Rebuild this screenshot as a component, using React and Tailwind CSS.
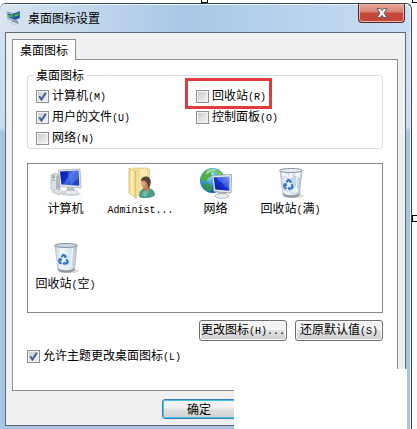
import { useState } from "react";

// Latin characters are set in half-width cells next to the Chinese text
function Mixed({ text, latin }) {
  return (
    <span className="whitespace-nowrap">
      {text}
      {latin && <span className="font-['Liberation_Mono','Noto_Sans_CJK_SC',monospace] text-[10px]">{latin}</span>}
    </span>
  );
}

function Check({ text, latin, checked = false, marked = false }) {
  const [on, setOn] = useState(checked);
  return (
    <label className="relative flex h-[18px] w-fit items-center gap-[3px]">
      <span className="relative h-[13px] w-[13px]">
        <input
          type="checkbox"
          checked={on}
          onChange={(e) => setOn(e.target.checked)}
          className="block h-[13px] w-[13px] appearance-none border border-[#8e8f8f] bg-linear-to-br from-[#c6cacf] to-[#f6f6f6] shadow-[inset_0_0_0_1px_#f4f4f4]"
        />
        {on && (
          <svg viewBox="0 0 13 13" className="pointer-events-none absolute inset-0 h-[13px] w-[13px]">
            <path d="M3.2 6.2 L5.5 9.5 L9.8 2.8" fill="none" stroke="#3f5b97" strokeWidth="2" />
          </svg>
        )}
      </span>
      <Mixed text={text} latin={latin} />
      {marked && <span className="pointer-events-none absolute -top-[9px] -right-[6px] -bottom-[4px] -left-[11px] border-3 border-[#e13b3f]" />}
    </label>
  );
}

function ComputerIcon() {
  return (
    <svg viewBox="0 0 32 32" className="h-8 w-8">
      <defs>
        <linearGradient id="pcScreen" x1="0" y1="0" x2="1" y2="0.5">
          <stop offset="0" stopColor="#0b1c9c" />
          <stop offset="0.45" stopColor="#1030c4" />
          <stop offset="0.55" stopColor="#3f68e2" />
          <stop offset="1" stopColor="#1c44cc" />
        </linearGradient>
      </defs>
      <ellipse cx="21" cy="27" rx="10" ry="2" fill="#d9dcdf" />
      <path d="M1 8 L5 6 L10 8 V23 L6 25 L1 22 Z" fill="#dce1e5" stroke="#9aa4ac" strokeWidth="0.6" />
      <path d="M6 9 L10 8 V23 L6 25 Z" fill="#aeb7bf" />
      <path d="M2 10 L5 11 M2 12.5 L5 13.5" stroke="#7d8890" strokeWidth="0.8" />
      <circle cx="3.5" cy="9" r="1" fill="#4fc04a" />
      <path d="M17 20 L24 20 L25 25 L17 25 Z" fill="#b6bfc7" />
      <ellipse cx="21" cy="25.5" rx="7" ry="2.3" fill="#e8ecef" stroke="#a3adb5" strokeWidth="0.6" />
      <path d="M8.5 3 L30 2 L31 21 L10 19.5 Z" fill="#e6ebf0" stroke="#a0a9b5" strokeWidth="0.7" />
      <path d="M10 4.4 L28.6 3.6 L29.3 18.8 L11.4 17.6 Z" fill="url(#pcScreen)" />
      <path d="M17 4.1 L28.6 3.6 L29 11 L21 17.9 Z" fill="#88a9f5" opacity="0.3" />
      <path d="M2 25 L7 22 L15 25 L9 28 Z" fill="#edf0f2" stroke="#a7b0b7" strokeWidth="0.6" />
      <path d="M4.5 25 L10 26.8 M6.5 24 L12 25.7" stroke="#b4bcc3" strokeWidth="0.6" />
    </svg>
  );
}

function UserFolderIcon() {
  return (
    <svg viewBox="0 0 32 32" className="h-8 w-8">
      <defs>
        <linearGradient id="folderFront" x1="0" y1="0" x2="1" y2="0">
          <stop offset="0" stopColor="#f3d980" />
          <stop offset="0.5" stopColor="#fdf2bd" />
          <stop offset="1" stopColor="#e9c964" />
        </linearGradient>
      </defs>
      <path d="M8 1 L23 1 L24.5 2.5 V24 L10 28 Z" fill="#f0dc96" stroke="#d8c07a" strokeWidth="0.6" />
      <path d="M10 2.5 L22 2 V25 L11 28 Z" fill="#faebb4" />
      <path d="M4 1 L11 4.5 V31 L4 26 Z" fill="url(#folderFront)" stroke="#d1b15a" strokeWidth="0.7" />
      <path d="M11 4.5 L14 2.5 V27.5 L11 31 Z" fill="#f7e59e" stroke="#d7bb68" strokeWidth="0.5" />
      <path d="M14 29.5 C14 23.5 17 21 21.5 21 C27 21 30 24 30 28 C28 31.5 16 32 14 29.5 Z" fill="#4b9d89" />
      <path d="M17 28 C18 24 21 23 24 23 L21 30 Z" fill="#73bba6" />
      <path d="M18.5 19 L24 19 L25 22 L21 24.5 L18 22 Z" fill="#bb7950" />
      <ellipse cx="20.5" cy="16" rx="4.3" ry="5.3" fill="#c98960" />
      <path d="M16 14 C16 8.5 25 8 25.7 13.5 C26 17 25 20 23 21 C23 17 22 14.5 19 13.5 Z" fill="#56402f" />
      <ellipse cx="18.5" cy="16.8" rx="1.6" ry="2.5" fill="#e1ab7d" />
    </svg>
  );
}

function NetworkIcon() {
  return (
    <svg viewBox="0 0 32 32" className="h-8 w-8">
      <defs>
        <radialGradient id="globe" cx="0.4" cy="0.25" r="0.8">
          <stop offset="0" stopColor="#c9efff" />
          <stop offset="0.4" stopColor="#3ea3e4" />
          <stop offset="1" stopColor="#0d4d9d" />
        </radialGradient>
        <linearGradient id="netScreen" x1="0" y1="1" x2="1" y2="0">
          <stop offset="0" stopColor="#0615a0" />
          <stop offset="0.5" stopColor="#1733cf" />
          <stop offset="0.55" stopColor="#3c61dc" />
          <stop offset="1" stopColor="#7c9cf0" />
        </linearGradient>
      </defs>
      <circle cx="12.5" cy="13.5" r="12.5" fill="url(#globe)" />
      <path d="M2 8 C5 3 9 1 12 1.5 L14 4 L11 6 L12 9 L8 11 L6 15 L3 14 L0.5 12 Z" fill="#4eae45" />
      <path d="M15 2 L20 4 L23 8 L20 9 L16 7 Z" fill="#75c749" />
      <path d="M4 16 L9 17 L12 21 L10 25 L6 23 L3 19 Z" fill="#329747" />
      <path d="M7 3.5 C10 1.5 14 1.5 17 3 C13 4 10 5 6 8 Z" fill="#e4ffda" opacity="0.55" />
      <path d="M18 24 L25 24 L27 29 L18 29 Z" fill="#aeb7bf" />
      <ellipse cx="22" cy="29" rx="7" ry="2.4" fill="#e7eaed" stroke="#99a4ac" strokeWidth="0.6" />
      <path d="M12 8.5 L31.5 7.5 L31 26 L14 24.5 Z" fill="#e4e9ee" stroke="#8f9aa8" strokeWidth="0.8" />
      <path d="M13.7 10.2 L29.7 9.4 L29.3 23.7 L15.3 22.6 Z" fill="url(#netScreen)" />
    </svg>
  );
}

function BinIcon({ full = false }) {
  return (
    <svg viewBox="0 0 32 32" className="h-8 w-8">
      <defs>
        <linearGradient id="binGlass" x1="0" y1="0" x2="1" y2="0">
          <stop offset="0" stopColor="#c4d3df" />
          <stop offset="0.3" stopColor="#f4f9fd" />
          <stop offset="0.7" stopColor="#dbe8f2" />
          <stop offset="1" stopColor="#aebfcd" />
        </linearGradient>
      </defs>
      <ellipse cx="20" cy="29" rx="9" ry="2" fill="#dddddd" />
      <path d="M5 3 L27 3 L24.5 28 C21 31 11 31 8 28 Z" fill="url(#binGlass)" stroke="#a8b7c4" strokeWidth="0.7" />
      <path d="M8 26 C11 29 21 29 24.5 26 L24.3 28.5 C21 31.5 11 31.5 8.2 28.5 Z" fill="#909ba4" />
      {full && (
        <g strokeWidth="0.5" stroke="#a9bccb">
          <path d="M6.5 4 L12 2 L17 5 L21 2 L26 5 L25 12 L20 9 L15 13 L9 9 L7 12 Z" fill="#edf3f8" />
          <path d="M15 13 L20 9 L25 12 L24 20 L18 17 Z" fill="#c7d8e5" />
          <path d="M17 20 L22 18 L24 24 L19 27 L14 24 Z" fill="#e6eff5" />
          <path d="M11 4 L14 8 M21 4 L18 9 M22 13 L21 18 M9 22 L13 25" fill="none" stroke="#7f99ad" />
        </g>
      )}
      <ellipse cx="16" cy="3.5" rx="11.5" ry="2" fill={full ? "#e7eef4" : "#c8d8e5"} stroke="#7e8992" strokeWidth="0.9" />
      <path d="M22.5 6 L21 25" stroke="#ffffff" strokeWidth="1.2" opacity="0.8" />
      <g fill="#3478d0">
        <path d="M10.5 14.5 L13 11.5 L16 13 L17 15.5 L14.5 16 L13.5 14 L12.5 16 Z" />
        <path d="M17 16.5 L19 19.5 L17.5 22.5 L14.5 22.5 L14.5 24 L12.5 21.5 L14.5 19 V20.5 L16.5 20 L15.5 18 Z" />
        <path d="M8.5 16.5 L11.5 16 L12.5 18.5 L11.3 18.5 L10.5 20 L12 20.5 L11.5 22.5 L9 21.5 L8 19 Z" />
      </g>
    </svg>
  );
}

function TitleIcon() {
  return (
    <svg viewBox="0 0 16 16" className="h-4 w-4">
      <path d="M1 2 L10 4 L9.5 11 L2 9 Z" fill="#dce7ef" stroke="#6d8799" strokeWidth="0.7" />
      <path d="M2 3.2 L9 4.8 L8.7 9.5 L2.8 8 Z" fill="#2460b1" />
      <path d="M2.5 6 L5 4.5 L7 5 L6 7 L4 7.5 Z" fill="#43b93d" />
      <path d="M7 4 L13.5 1.5 L13.5 8 L8 10 Z" fill="#2546a8" stroke="#446a7c" strokeWidth="0.6" />
      <path d="M8 5 L12.5 3 L12.5 5.5 L8.5 7 Z" fill="#48b94e" />
      <path d="M7 9 L11 10 L13 13 L9 15 L4 13 L6 11 Z" fill="#8f9cad" />
      <path d="M6 11.5 L11 13.5 L9 15 L4 13 Z" fill="#d6dde4" />
    </svg>
  );
}

const items = [
  { icon: <ComputerIcon />, text: "计算机" },
  { icon: <UserFolderIcon />, latin: "Administ..." },
  { icon: <NetworkIcon />, text: "网络" },
  { icon: <BinIcon full />, text: "回收站", latin: "(", inner: "满" },
  { icon: <BinIcon />, text: "回收站", latin: "(", inner: "空" },
];

function DesktopItem({ icon, text, latin, inner }) {
  return (
    <li className="flex h-[70px] flex-col items-center">
      {icon}
      <span className="leading-[18px] whitespace-nowrap">
        <Mixed text={text} latin={latin} />
        {inner && <Mixed text={inner} latin=")" />}
      </span>
    </li>
  );
}

function PushButton({ children }) {
  return (
    <button
      type="button"
      className="flex h-[21px] w-[88px] items-center justify-center rounded-[3px] border border-[#707070] bg-linear-to-b from-[#f3f3f3] from-45% via-[#e2e2e2] via-50% to-[#cfcfcf] shadow-[inset_0_0_0_1px_#fafafa]"
    >
      {children}
    </button>
  );
}

export default function App() {
  return (
    <div className="relative min-h-screen overflow-hidden bg-white pt-[3px] pr-[5px] font-['Noto_Sans_CJK_SC',sans-serif] text-[12px] leading-4 text-black">
      {/* Selection handles */}
      <span className="absolute -top-[4px] left-[201px] h-[7px] w-[7px] border border-black bg-white" />
      <span className="absolute -top-[4px] -right-[2px] h-[7px] w-[7px] border border-black bg-white" />
      <span className="absolute top-1/2 -right-[2px] h-[7px] w-[7px] border border-black bg-white" />

      <main className="rounded-t-[6px] border-t border-r border-[#364454] bg-linear-to-b from-[#d4e3f3] from-0% via-[#c9dcf0] via-29% to-[#a8c4e2] to-30% shadow-[inset_-1px_1px_0_#eef6fd]">
        {/* Title bar */}
        <header className="flex h-7 items-start justify-between rounded-t-[6px] bg-linear-to-r from-[#d9e5f0] via-[#a9c7e6] via-45% to-[#cadff3] pr-[6px] pl-[6px] shadow-[inset_-1px_1px_0_#eef6fd]">
          <div className="flex h-7 items-center gap-[6px]">
            <TitleIcon />
            <h1 className="font-normal">桌面图标设置</h1>
          </div>
          <button
            type="button"
            aria-label="关闭"
            className="flex h-[19px] w-[47px] items-center justify-center rounded-b-[4px] border border-t-0 border-[#5a2527] bg-linear-to-b from-[#e5a99d] from-0% via-[#d98170] via-45% to-[#c5473a] to-50% shadow-[inset_0_0_0_1px_#eeb5a9]"
          >
            <svg viewBox="0 0 12 10" className="h-[10px] w-3">
              <path d="M1 0.5 H4.3 L6 2.7 L7.7 0.5 H11 L8 5 L11 9.5 H7.7 L6 7.3 L4.3 9.5 H1 L4 5 Z" fill="#ffffff" stroke="#59515c" strokeWidth="0.9" />
            </svg>
          </button>
        </header>

        <div className="px-[5px] pb-1">
          <div className="border border-[#5b6b7c] bg-[#f0f0f0] px-[6px] pt-[6px] pb-[6px]">
            <div role="tablist" className="flex">
              <button type="button" role="tab" aria-selected="true" className="relative z-10 -mb-px h-[21px] w-[64px] border border-b-0 border-[#898c95] bg-white">
                桌面图标
              </button>
            </div>

            <section role="tabpanel" className="mr-px border border-[#898c95] bg-white px-[14px] pt-[7px] pb-[25px]">
              <fieldset className="rounded-[3px] border border-[#d5dfe5] px-2 pt-1 pb-px">
                <legend className="-ml-[2px] px-[2px]">桌面图标</legend>
                <div className="grid grid-cols-[160px_1fr] gap-y-[3px]">
                  <Check text="计算机" latin="(M)" checked />
                  <Check text="回收站" latin="(R)" marked />
                  <Check text="用户的文件" latin="(U)" checked />
                  <Check text="控制面板" latin="(O)" />
                  <Check text="网络" latin="(N)" />
                </div>
              </fieldset>

              <ul className="mt-[14px] grid grid-cols-[repeat(auto-fill,75px)] gap-y-[5px] border border-[#828790] bg-white pt-[3px]">
                {items.map((item, i) => (
                  <DesktopItem key={i} {...item} />
                ))}
              </ul>

              <div className="mt-[7px] flex justify-end gap-2">
                <PushButton>
                  <Mixed text="更改图标" latin="(H)..." />
                </PushButton>
                <PushButton>
                  <Mixed text="还原默认值" latin="(S)" />
                </PushButton>
              </div>

              <div className="mt-[6px]">
                <Check text="允许主题更改桌面图标" latin="(L)" checked />
              </div>
            </section>

            <div className="mt-2 flex pl-[150px]">
              <button type="button" className="h-[20px] w-[74px] rounded-[3px] border border-[#3c7fb1] bg-linear-to-b from-[#f3f3f3] from-45% via-[#e2e2e2] via-50% to-[#cfcfcf] shadow-[inset_0_0_0_1px_#48c2e6]">
                确定
              </button>
            </div>
          </div>
        </div>
      </main>

      {/* Blank patch over the lower right of the dialog */}
      <div className="absolute top-[369px] right-[10px] bottom-0 left-[234px] bg-white" />
    </div>
  );
}
